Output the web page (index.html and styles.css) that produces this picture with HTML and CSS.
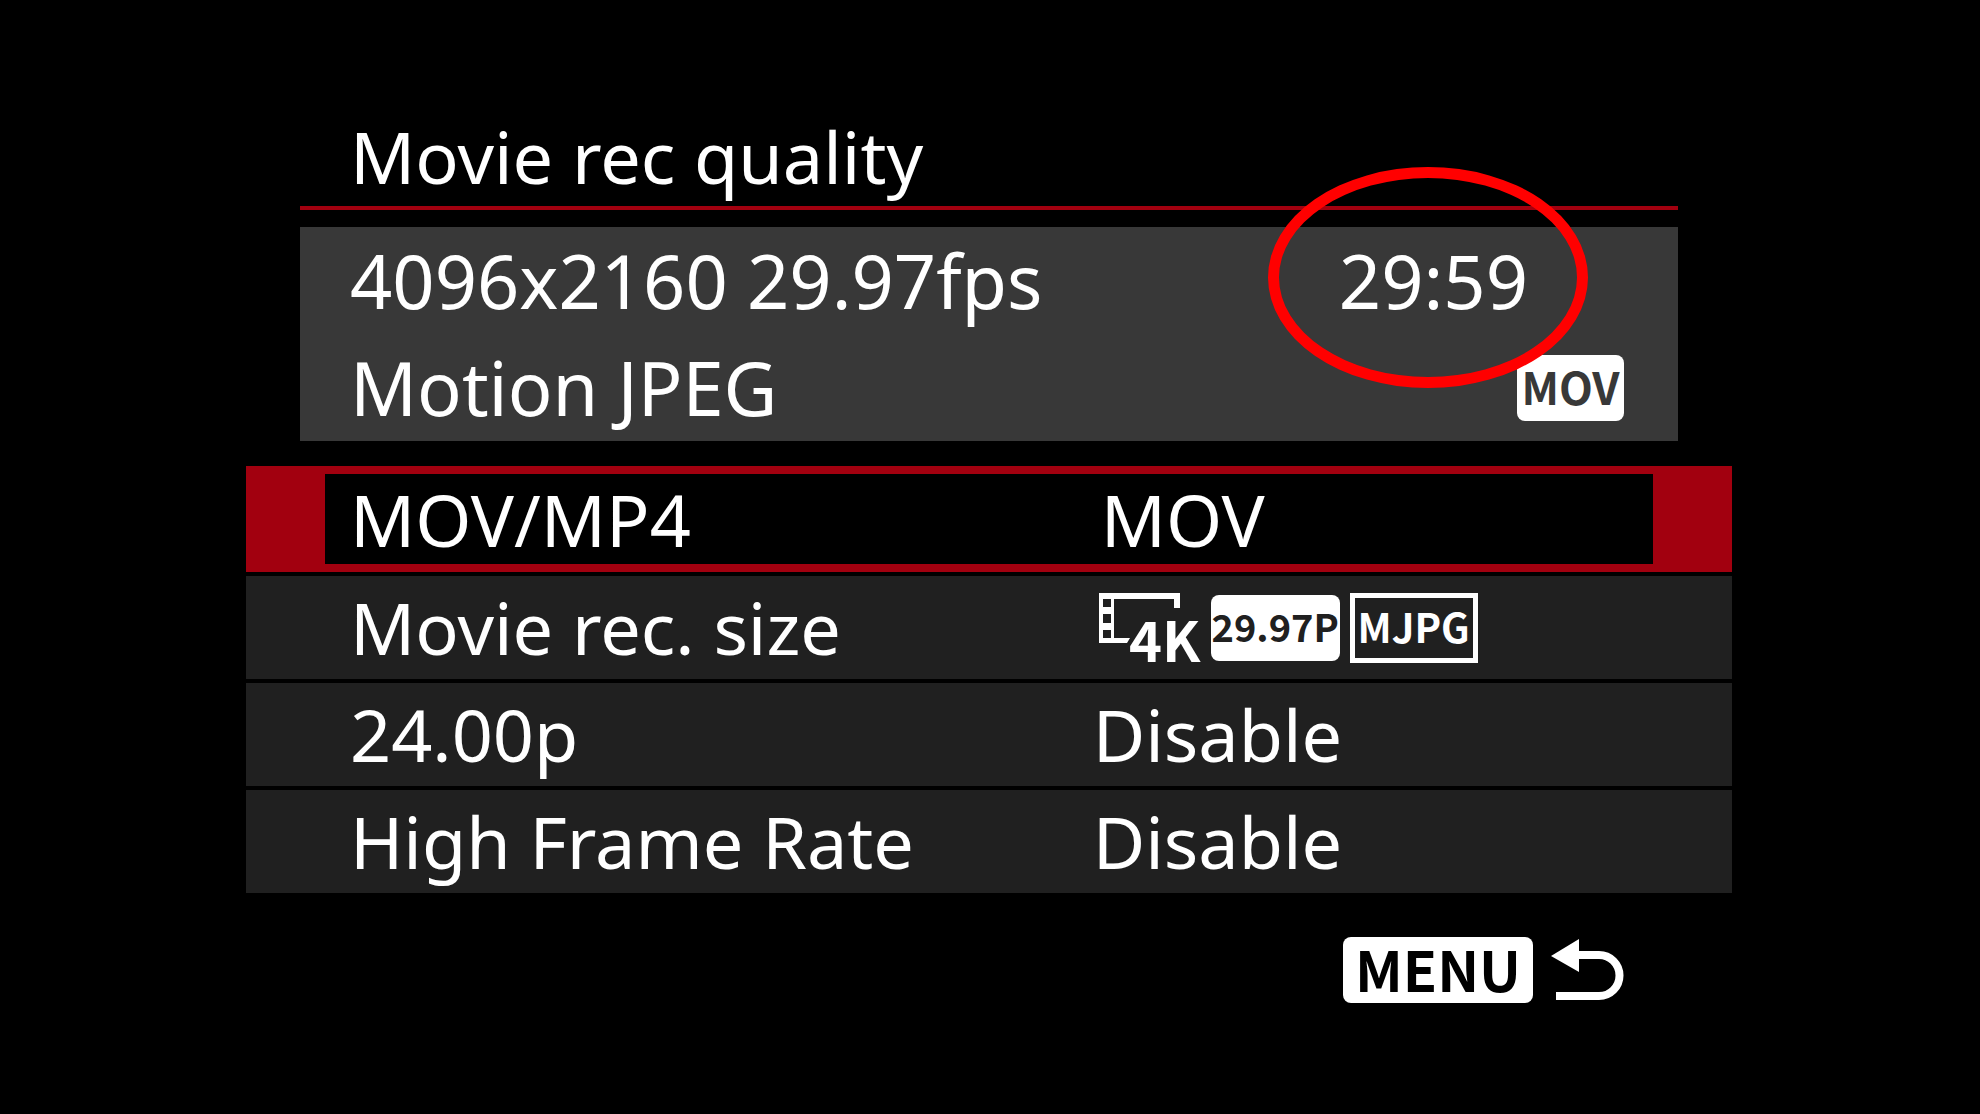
FILE: index.html
```
<!DOCTYPE html>
<html lang="en">
<head>
    <meta charset="UTF-8">
    <meta name="viewport" content="width=device-width, initial-scale=1.0">
    <title>Movie rec quality</title>
    <link rel="stylesheet" href="styles.css">
</head>
<body>
    <main class="screen">
        <h1 class="title">Movie rec quality</h1>

        <section class="info">
            <div class="info-row">
                <span>4096x2160 29.97fps</span>
                <span class="time">29:59<span class="marker"></span></span>
            </div>
            <div class="info-row">
                <span>Motion JPEG</span>
                <span class="badge badge-mov">MOV</span>
            </div>
        </section>

        <div class="menu">
            <button type="button" class="menu-row selected">
                <span>MOV/MP4</span>
                <span class="value inset">MOV</span>
            </button>
            <button type="button" class="menu-row">
                <span>Movie rec. size</span>
                <span class="value icons">
                    <svg class="icon-4k" width="102" height="70" viewBox="0 0 102 70" role="img" aria-label="4K">
                        <path d="M0 0H81V15H75V6H15V45H31L28 50H0Z" fill="#fff"/>
                        <path d="M4 6h8v8h-8zM4 21h8v9h-8zM4 37h8v8h-8z" fill="#202020"/>
                        <text x="30" y="69" class="text-4k">4K</text>
                    </svg>
                    <span class="badge badge-fps">29.97P</span>
                    <span class="badge badge-outline">MJPG</span>
                </span>
            </button>
            <button type="button" class="menu-row">
                <span>24.00p</span>
                <span class="value">Disable</span>
            </button>
            <button type="button" class="menu-row">
                <span>High Frame Rate</span>
                <span class="value">Disable</span>
            </button>
        </div>

        <footer class="footer">
            <button type="button" class="back">
                <span class="badge badge-menu">MENU</span>
                <svg width="73" height="62" viewBox="0 0 73 62" aria-hidden="true">
                    <path d="M0 17L28 0V33Z" fill="#fff"/>
                    <path d="M26 16H48A20.5 20.5 0 0 1 48 57H5" fill="none" stroke="#fff" stroke-width="8"/>
                </svg>
            </button>
        </footer>
    </main>
</body>
</html>
```

FILE: styles.css
```
* {
    box-sizing: border-box;
}
body {
    margin: 0;
    background: #000;
    color: #fff;
    font-family: "Noto Sans", sans-serif;
    font-size: 72px;
}
button {
    border: 0;
    padding: 0;
    background: none;
    color: inherit;
    font: inherit;
    text-align: left;
    cursor: pointer;
}
.screen {
    padding: 116px 248px 0 246px;
    white-space: nowrap;
}

/* header */
.title {
    margin: 0 54px;
    padding: 0 0 10px 50px;
    border-bottom: 4px solid #a2000f;
    font-size: 72px;
    font-weight: 400;
    line-height: 80px;
}
.info {
    margin: 17px 54px 25px;
    padding: 0 54px 0 50px;
    background: #383838;
    font-size: 74px;
}
.info-row {
    display: flex;
    align-items: center;
    justify-content: space-between;
    line-height: 107px;
}
.time {
    position: relative;
    margin-right: 96px;
}
/* red ring around the remaining time */
.marker {
    position: absolute;
    z-index: 1;
    top: -60px;
    left: -71px;
    width: 320px;
    height: 221px;
    border: 11px solid #f00;
    border-radius: 50%;
}

/* menu */
.menu {
    display: flex;
    flex-direction: column;
    gap: 4px;
}
.menu-row {
    display: grid;
    grid-template-columns: 57% 1fr;
    align-items: center;
    padding: 12px 79px 12px 104px;
    background: #202020;
    line-height: 79px;
}
.menu-row.selected {
    padding: 6px 0 5px 25px;
    border: solid #a2000f;
    border-width: 8px 79px;
    background: #000;
}
.inset {
    padding-left: 8px;
}
.icons {
    display: flex;
    align-items: center;
    gap: 10px;
    padding-left: 6px;
}
.icon-4k {
    overflow: visible;
}
.text-4k {
    fill: #fff;
    font-family: "Noto Sans CJK JP", sans-serif;
    font-size: 56px;
    font-weight: 700;
}

/* badges */
.badge {
    display: flex;
    align-items: center;
    justify-content: center;
    height: 66px;
    padding-bottom: 4px;
    border-radius: 8px;
    background: #fff;
    color: #202020;
    font-family: "Noto Sans CJK JP", sans-serif;
    font-size: 40px;
    font-weight: 700;
    line-height: 62px;
}
.badge-mov {
    width: 107px;
    color: #383838;
    font-size: 44px;
}
.badge-fps {
    width: 129px;
    font-size: 38px;
}
.badge-outline {
    width: 128px;
    height: 70px;
    border: 5px solid #fff;
    border-radius: 0;
    background: none;
    color: #fff;
}
.badge-menu {
    width: 190px;
    color: #000;
    font-size: 56px;
}

/* footer */
.footer {
    display: flex;
    justify-content: flex-end;
    margin-top: 44px;
    padding-right: 108px;
}
.back {
    display: flex;
    align-items: center;
    gap: 18px;
}
```
